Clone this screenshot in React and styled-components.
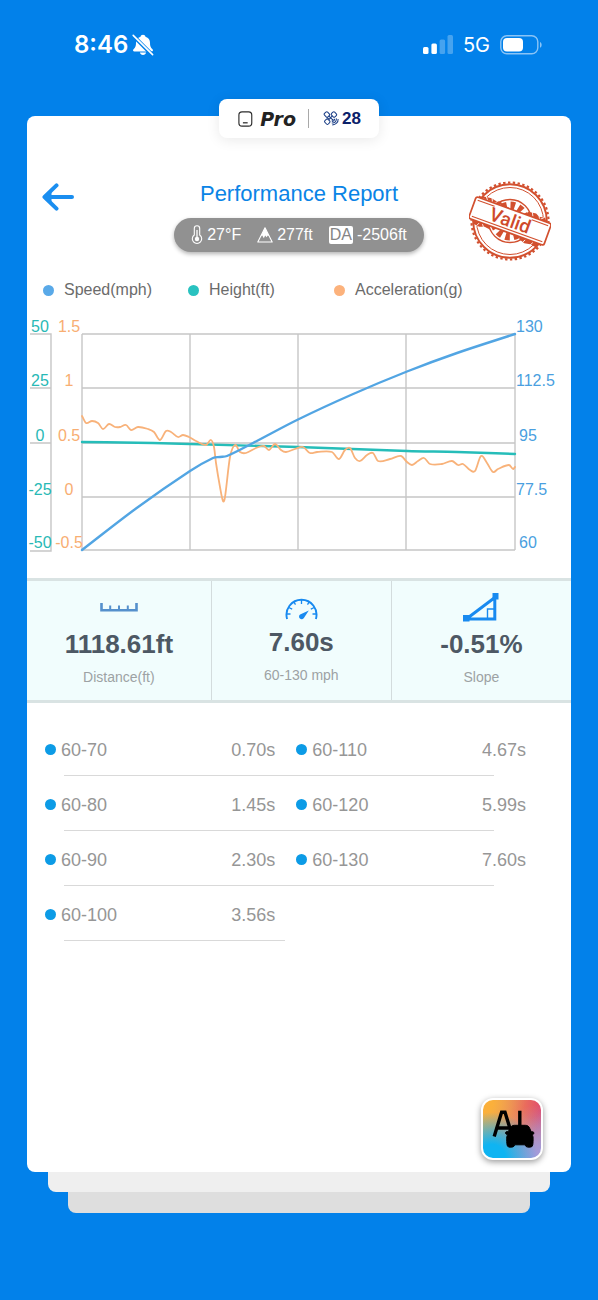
import React from "react";
import styled, { createGlobalStyle } from "styled-components";

const GlobalStyle = createGlobalStyle`
  *, *::before, *::after { box-sizing: border-box; }
  body {
    margin: 0;
    background: #0281ea;
    font-family: "Liberation Sans", Arial, sans-serif;
  }
  button { font: inherit; border: 0; padding: 0; background: none; cursor: pointer; }
`;

const Page = styled.div`
  min-height: 100vh;
  display: flex;
  flex-direction: column;
  padding: 0 27px 87px;
`;

const StatusBar = styled.header`
  display: flex;
  align-items: center;
  justify-content: space-between;
  height: 116px;
  padding: 0 28px 27px 47px;
  color: #fff;
`;

const StatusGroup = styled.div`
  display: flex;
  align-items: center;
  gap: ${(p) => p.$gap}px;
`;

const Clock = styled.span`
  font: 600 24px/32px Inter, sans-serif;
`;

const Network = styled.span`
  font: 400 20px/32px Inter, sans-serif;
`;

const Card = styled.main`
  position: relative;
  flex: 1;
  display: flex;
  flex-direction: column;
  background: #fff;
  border-radius: 8px;
`;

const StackedSheet = styled.div`
  height: ${(p) => p.$height}px;
  margin: 0 ${(p) => p.$inset}px;
  background: ${(p) => p.$color};
  border-radius: 0 0 8px 8px;
`;

const DeviceBadge = styled.div`
  position: absolute;
  top: -17px;
  left: 50%;
  transform: translateX(-50%);
  display: flex;
  align-items: center;
  width: 160px;
  height: 39px;
  padding: 0 18px;
  background: #fff;
  border-radius: 8px;
  box-shadow: 0 2px 14px rgba(0, 0, 0, 0.09);
`;

const ProLabel = styled.span`
  margin-left: 7px;
  color: #222;
  font: italic 700 19px/20px "DejaVu Sans", sans-serif;
`;

const BadgeDivider = styled.span`
  width: 1px;
  height: 19px;
  margin: 0 14px 0 12px;
  background: #a9a9a9;
`;

const SatelliteCount = styled.span`
  margin-left: 3px;
  color: #0b2069;
  font: 700 17px/20px "Liberation Sans", sans-serif;
`;

const ReportHeader = styled.section`
  display: grid;
  grid-template-columns: 1fr auto 1fr;
  align-items: start;
  padding: 64px 15px 0;
`;

const BackButton = styled.button`
  justify-self: start;
  display: flex;
  margin-top: 2px;
`;

const TitleBlock = styled.div`
  display: flex;
  flex-direction: column;
  align-items: center;
  gap: 10px;
`;

const Title = styled.h1`
  margin: 0;
  color: #0a84e6;
  font-size: 22px;
  font-weight: 400;
  line-height: 28px;
`;

const Conditions = styled.div`
  display: flex;
  align-items: center;
  justify-content: center;
  gap: 16px;
  width: 250px;
  height: 34px;
  border-radius: 17px;
  background: #919191;
  box-shadow: 0 2px 4px rgba(0, 0, 0, 0.3);
  color: #fff;
`;

const Condition = styled.span`
  display: flex;
  align-items: center;
  gap: 4px;
  font-size: 16px;
  line-height: 20px;
  white-space: nowrap;
`;

const DensityTag = styled.span`
  padding: 0 1px;
  border-radius: 2px;
  background: #fff;
  color: #858585;
  line-height: 18px;
`;

const StampHolder = styled.div`
  justify-self: end;
  display: flex;
  margin-right: 5px;
`;

const Legend = styled.ul`
  display: grid;
  grid-template-columns: 145px 146px auto;
  justify-content: start;
  margin: 0;
  padding: 18px 16px 0;
  list-style: none;
`;

const LegendItem = styled.li`
  display: flex;
  align-items: center;
  gap: 10px;
  color: #6b6b6b;
  font-size: 16px;
  line-height: 20px;
`;

const Dot = styled.span`
  flex: none;
  display: inline-block;
  width: 11px;
  height: 11px;
  border-radius: 50%;
  background: ${(p) => p.$color};
`;

const Chart = styled.svg`
  display: block;
  width: 100%;
  margin: 14px 0 18px;
  font-family: "Liberation Sans", Arial, sans-serif;
  font-size: 16px;
`;

const Stats = styled.section`
  display: grid;
  grid-template-columns: 51fr 50fr 50fr;
  border: solid #d9e3e3;
  border-width: 3px 0;
  background: #f1fdfd;
`;

const Stat = styled.div`
  display: flex;
  flex-direction: column;
  align-items: center;
  height: 119px;
  padding-top: ${(p) => (p.$raised ? 9 : 11)}px;
  border-left: ${(p) => (p.$first ? "0" : "1px solid #d3dcdd")};
`;

const StatIcon = styled.div`
  display: flex;
  align-items: ${(p) => p.$align || "center"};
  height: 30px;
`;

const StatValue = styled.strong`
  margin-top: 6px;
  color: #4d5864;
  font-size: 26px;
  line-height: 32px;
`;

const StatLabel = styled.span`
  margin-top: 7px;
  color: #9da2a4;
  font-size: 14px;
  line-height: 20px;
`;

const Splits = styled.table`
  width: calc(100% - 62px);
  margin: 18px 45px 0 17px;
  border-collapse: collapse;
  table-layout: fixed;
  color: #969696;
  font-size: 18px;
  line-height: 20px;
`;

const SplitRow = styled.tr`
  height: 55px;
  background: linear-gradient(#d9d9d9, #d9d9d9) 20px 100% no-repeat;
  background-size: ${(p) => (p.$half ? "46%" : "calc(100% - 52px)")} 1px;
`;

const SplitRange = styled.th`
  width: ${(p) => (p.$second ? 31 : 29)}%;
  padding: 2px 0 0 ${(p) => (p.$second ? 21 : 1)}px;
  font-weight: 400;
  text-align: left;
`;

const RangeLabel = styled.span`
  display: flex;
  align-items: center;
  gap: 5px;
`;

const SplitTime = styled.td`
  width: ${(p) => (p.$second ? 21 : 19)}%;
  padding: 2px 0 0;
  text-align: right;
`;

const AiButton = styled.button`
  display: flex;
  align-self: flex-end;
  width: 62px;
  height: 62px;
  margin: auto 28px 12px 0;
  overflow: hidden;
  border: 2px solid #fff;
  border-radius: 12px;
  background:
    radial-gradient(circle at 15% 100%, #0fb4f2 0 18%, rgba(15, 180, 242, 0) 60%),
    radial-gradient(circle at 0% 5%, #fbb03b 0 12%, rgba(251, 176, 59, 0) 75%),
    radial-gradient(circle at 100% 100%, #a59ad8 0 10%, rgba(165, 154, 216, 0) 65%),
    radial-gradient(circle at 85% 15%, #e0486f 0 12%, rgba(224, 72, 111, 0) 75%),
    #c3a39c;
  box-shadow: 0 2px 6px rgba(0, 0, 0, 0.4);
`;

const accelPoints = [
  [0, 82], [4, 89], [10, 87], [16, 89], [21, 95], [27, 90], [33, 93], [38, 93],
  [44, 91], [49, 96], [56, 93], [66, 95], [72, 98], [78, 106], [84, 97],
  [89, 98], [96, 103], [101, 101], [107, 103], [114, 107], [124, 111],
  [129, 106], [132, 113], [134, 129], [138, 153], [141, 167], [143, 163],
  [148, 123], [153, 111], [158, 118], [164, 119], [174, 114], [182, 112],
  [187, 116], [193, 110], [199, 116], [204, 118], [213, 115], [221, 113],
  [228, 119], [235, 118], [250, 118], [257, 125], [263, 116], [268, 114],
  [273, 124], [278, 127], [285, 121], [291, 119], [296, 127], [308, 125],
  [319, 122], [325, 128], [330, 131], [336, 127], [342, 124], [348, 130],
  [360, 130], [370, 127], [376, 131], [381, 130], [388, 136], [393, 137],
  [399, 122], [405, 129], [411, 138], [416, 135], [427, 131], [431, 135],
  [433, 133],
];

const speedPoints = [
  [0, 216], [54, 174.500], [108, 137], [131, 124], [138, 123], [145, 122],
  [171, 109], [216, 85.500], [270, 60.500], [325, 37.500], [375, 19], [433, 0],
];

const heightPoints = [[0, 108], [71, 109], [216, 113], [325, 117], [375, 118], [433, 120]];

/* Catmull-Rom spline through the samples, as cubic segments. */
function smoothPath(points) {
  let d = `M${points[0][0]} ${points[0][1]}`;
  for (let i = 0; i < points.length - 1; i += 1) {
    const a = points[Math.max(i - 1, 0)];
    const b = points[i];
    const c = points[i + 1];
    const e = points[Math.min(i + 2, points.length - 1)];
    const step = (c[0] - b[0]) / 3;
    const slopeB = (c[1] - a[1]) / (c[0] - a[0]);
    const slopeC = (e[1] - b[1]) / (e[0] - b[0]);
    d += ` C${b[0] + step} ${b[1] + slopeB * step} ${c[0] - step} ${c[1] - slopeC * step} ${c[0]} ${c[1]}`;
  }
  return d;
}

const rowsY = [0, 54, 109, 163, 216];
const columnsX = [0, 108, 216, 324, 433];
const labelsY = [-2, 52, 107, 161, 214];
const heightLabels = ["50", "25", "0", "-25", "-50"];
const accelLabels = ["1.5", "1", "0.5", "0", "-0.5"];
const speedLabels = ["130", "112.5", "95", "77.5", "60"];

function ReportChart() {
  return (
    <Chart viewBox="-55 -20 544 246" role="img" aria-label="Speed, height and acceleration">
      <g stroke="#c6c6c6" strokeWidth="1.4" fill="none">
        {rowsY.map((y) => <path key={y} d={`M0 ${y}H433`} />)}
        {columnsX.map((x) => <path key={x} d={`M${x} 0V216`} />)}
        <path d="M-52 0H-31V217H-52M-52 54H-31M-52 109H-31" />
      </g>
      <g fill="#28b9b6" textAnchor="middle">
        {heightLabels.map((t, i) => <text key={t} x={-42} y={labelsY[i]}>{t}</text>)}
      </g>
      <g fill="#f8ae72" textAnchor="middle">
        {accelLabels.map((t, i) => <text key={t} x={-13} y={labelsY[i]}>{t}</text>)}
      </g>
      <g fill="#4a9fe0">
        {speedLabels.map((t, i) => (
          <text key={t} x={t.length < 3 ? 437 : 434} y={labelsY[i]}>{t}</text>
        ))}
      </g>
      <g fill="none" strokeLinecap="round" strokeLinejoin="round">
        <path d={smoothPath(heightPoints)} stroke="#26bdb9" strokeWidth="2.4" />
        <path d={smoothPath(accelPoints)} stroke="#f8b27a" strokeWidth="1.8" />
        <path d={smoothPath(speedPoints)} stroke="#52a5e3" strokeWidth="2.4" />
      </g>
    </Chart>
  );
}

const MutedBell = () => (
  <svg width="22" height="22" viewBox="0 0 22 22" aria-label="Silent mode">
    <path d="M11 .8c-1.400 0-2.300.9-2.500 2C5.500 3.700 4 6 4 8.800c0 3.400-.6 4.700-2.500 6.400-.9.900-.4 2.200.8 2.200h17.400c1.200 0 1.700-1.300.8-2.200C18.600 13.500 18 12.200 18 8.800c0-2.800-1.500-5.100-4.500-6C13.300 1.700 12.400.8 11 .8zM7.900 18.600h6.200c-.3 1.600-1.500 2.500-3.100 2.500s-2.800-.9-3.100-2.500z" fill="#fff" />
    <path d="M.6 2.500 18.800 20.700" stroke="#0281ea" strokeWidth="2" />
    <path d="M2 .6 21.200 19.800" stroke="#0281ea" strokeWidth="1.200" />
    <path d="M1.200 1.400 20.600 20.600" stroke="#fff" strokeWidth="1.600" strokeLinecap="round" />
  </svg>
);

const SignalBars = () => (
  <svg width="30" height="20" viewBox="0 0 30 20" aria-label="Signal, two of four bars">
    <g fill="#fff">
      <rect x="0" y="12" width="5.500" height="7" rx="1.500" />
      <rect x="8.400" y="8.500" width="5.500" height="10.500" rx="1.500" />
      <rect x="16.600" y="4.500" width="5.500" height="14.500" rx="1.500" opacity=".27" />
      <rect x="24.500" y="0" width="5.500" height="19" rx="1.500" opacity=".27" />
    </g>
  </svg>
);

const Battery = () => (
  <svg width="43" height="20" viewBox="0 0 43 20" aria-label="Battery, half full">
    <rect x=".8" y=".8" width="37" height="18" rx="6" fill="none" stroke="#8ac4f6" strokeWidth="1.400" />
    <rect x="3" y="3" width="20" height="13.600" rx="4" fill="#fff" />
    <path d="M40 7c2.200.8 2.200 5 0 5.800z" fill="#8ac4f6" />
  </svg>
);

const DeviceIcon = () => (
  <svg width="17" height="18" viewBox="0 0 17 18" aria-hidden="true">
    <rect x="2" y="1.500" width="13.500" height="15" rx="3.300" fill="none" stroke="#2b2b2b" strokeWidth="1.200" />
    <path d="M6.200 13h5" stroke="#2b2b2b" strokeWidth="1.300" />
  </svg>
);

const SatelliteIcon = () => (
  <svg width="17" height="17" viewBox="0 0 17 17" fill="none" stroke="#1c3f86" strokeWidth="1.100" aria-hidden="true">
    <rect x="1.600" y="2" width="5" height="4.600" rx="1.300" transform="rotate(45 4.100 4.300)" />
    <rect x="9" y="2" width="5" height="4.600" rx="1.300" transform="rotate(45 11.500 4.300)" />
    <rect x="2" y="9.500" width="5" height="4.600" rx="1.300" transform="rotate(45 4.500 11.800)" />
    <path d="M6 5.800 10.200 10M9.800 5.800 6.200 9.700M4.200 7.200l2 2M9.300 10.800l1.600-1.600" />
    <path d="M14 8.300c.6 2.800-1.800 5.300-4.800 5M12.200 8.700c.1 1.600-1.200 3-2.900 3M15.900 9c.2 3.500-2.600 6.300-6.100 6.200" />
  </svg>
);

const BackArrow = () => (
  <svg width="33" height="30" viewBox="0 0 33 30" fill="none" stroke="#1a8ef0" strokeWidth="4" strokeLinecap="round" strokeLinejoin="round" aria-hidden="true">
    <path d="M2.500 15H30M14.500 3.400 2.500 15l12 11.600" />
    <path d="M3 15 9.500 8.800v12.400z" fill="#1a8ef0" strokeWidth="0" />
  </svg>
);

const Thermometer = () => (
  <svg width="12" height="20" viewBox="0 0 12 20" aria-hidden="true">
    <path d="M3.300 10V3.500a2.700 2.700 0 0 1 5.400 0V10a4.700 4.700 0 1 1-5.400 0z" fill="none" stroke="#fff" strokeWidth="1.100" />
    <path d="M6 5v8" stroke="#fff" strokeWidth="1.300" />
    <circle cx="6" cy="14" r="2.200" fill="#fff" />
  </svg>
);

const Mountain = () => (
  <svg width="16" height="16" viewBox="0 0 16 16" aria-hidden="true">
    <path d="M8 .8.800 15h14.400z" fill="none" stroke="#fff" strokeWidth="1.100" strokeLinejoin="round" />
    <path d="M8 .8 3.700 9.400l1.600-1 1.500 2.800 1.400-2.600 1.300 1.600 1.300-1.700 1.500.8z" fill="#fff" />
  </svg>
);

const Stamp = () => (
  <svg width="82" height="82" viewBox="-41 -41 82 82" role="img" aria-label="Valid">
    <g fill="none" stroke="#d2502f">
      <circle r="38.500" strokeWidth="2.200" strokeDasharray="2.400 2.440" />
      <circle r="36.800" strokeWidth="1.900" />
      <circle r="33.500" strokeWidth="1" />
      <circle r="21.500" strokeWidth="1.300" />
      <circle r="15.500" strokeWidth="8" strokeDasharray="4.400 3.720" />
    </g>
    <g transform="rotate(20)">
      <path d="M-33-14l8-1 5 1 5-1 3 3h-25zM14-15l8-1 4 2 6-1 3 4H14zM-34 15l7 1 5-2 7 1-4-4h-17zM15 14l6 2 6-1 6 1 3-5H14z" fill="#d2502f" />
      <g stroke="#fff" strokeWidth=".8">
        <path d="M-31-15l3 3M-25-16l2 4M-18-15l-2 3M18-16l2 4M25-16l2 4M31-15l-3 3M-30 16l2-4M-22 16l-3-4M19 16l2-4M27 16l2-4" />
      </g>
      <rect x="-40" y="-11.500" width="80" height="23" rx="2" fill="#fff" stroke="#d2502f" strokeWidth="1.700" />
      <path d="M-37.500-8.500h18M20-8.500h17.500M-37.500 8.500h75" stroke="#d2502f" strokeWidth="1.100" />
      <text y="6" textAnchor="middle" fill="#cf4a2b" fontFamily="Roboto, sans-serif" fontWeight="500" fontSize="19">Valid</text>
    </g>
  </svg>
);

const Ruler = () => (
  <svg width="38" height="9" viewBox="0 0 38 9" fill="none" stroke="#5590cc" aria-hidden="true">
    <path d="M1.500 0v7.200h35V0" strokeWidth="2.600" />
    <path d="M10.200 2.500V7M19 2.500V7M27.800 2.500V7" strokeWidth="2" />
  </svg>
);

const Gauge = () => (
  <svg width="33" height="22" viewBox="0 0 33 22" fill="none" stroke="#188af0" aria-hidden="true">
    <path d="M2.100 21A15 15 0 1 1 30.900 21" strokeWidth="1.900" />
    <path d="M16.500 2v4M9 4.200l1.500 2.500M24 4.200l-1.500 2.500M3.700 9.500l3.500 1.600M29.300 9.500l-3.500 1.600M2 16h3.500M31 16h-3.500" strokeWidth="1.300" />
    <path d="M23.800 12.500 18.900 20a2.600 2.600 0 1 1-3.800-3.400z" fill="#188af0" stroke="none" />
  </svg>
);

const SlopeIcon = () => (
  <svg width="36" height="29" viewBox="0 0 36 29" fill="none" stroke="#188af0" aria-hidden="true">
    <path d="M4 25.500 31.800 4.500V26H3z" strokeWidth="3" />
    <path d="M24.500 25v-9H31" strokeWidth="1.400" />
    <path d="M0 22h6.500v6.500H0zM29.500 0h6v6.500h-6z" fill="#188af0" stroke="none" />
  </svg>
);

const AiCar = () => (
  <svg width="58" height="58" viewBox="0 0 58 58" aria-hidden="true">
    <path d="M11.200 36.500 18.600 12.200h3.400L29.500 36.500M14 28h14M36.800 10.800V32" fill="none" stroke="#000" strokeWidth="3.400" />
    <g transform="translate(-1.600 -1)">
      <path d="M33 26.300h11c2 0 3.500 1 4.300 3l1.500 3.500c1.500-.4 2.900.3 2.700 1.400-.1.900-.8 1.300-1.700 1.500.9 1.500 1 2.700.9 5.200-.1 2.500 0 4.800-.9 6.400-.8 1.200-5.600 1.200-6.300 0l-.9-1.500H33.400l-.9 1.500c-.7 1.200-5.500 1.200-6.300 0-.9-1.600-.8-3.900-.9-6.400-.1-2.500.1-3.900 1-5.200-1-.1-2-.5-2.200-1.600-.2-1.200 1.300-1.800 2.700-1.300l1.900-3.500c1-2 2.300-3 4.300-3z" fill="#000" stroke="#000" strokeWidth="1" strokeLinejoin="round" />
    </g>
  </svg>
);

const legend = [
  ["Speed(mph)", "#59a9e8"],
  ["Height(ft)", "#29c2c0"],
  ["Acceleration(g)", "#fcb27c"],
];

const splits = [
  ["60-70", "0.70s", "60-110", "4.67s"],
  ["60-80", "1.45s", "60-120", "5.99s"],
  ["60-90", "2.30s", "60-130", "7.60s"],
  ["60-100", "3.56s"],
];

function SplitCells({ range, time, second }) {
  return (
    <>
      <SplitRange scope="row" $second={second}>
        <RangeLabel><Dot $color="#0c9be6" />{range}</RangeLabel>
      </SplitRange>
      <SplitTime $second={second}>{time}</SplitTime>
    </>
  );
}

export default function App() {
  return (
    <>
      <GlobalStyle />
      <Page>
        <StatusBar>
          <StatusGroup $gap={4}>
            <Clock>8:46</Clock>
            <MutedBell />
          </StatusGroup>
          <StatusGroup $gap={10}>
            <SignalBars />
            <Network>5G</Network>
            <Battery />
          </StatusGroup>
        </StatusBar>

        <Card>
          <DeviceBadge>
            <DeviceIcon />
            <ProLabel>Pro</ProLabel>
            <BadgeDivider />
            <SatelliteIcon />
            <SatelliteCount>28</SatelliteCount>
          </DeviceBadge>

          <ReportHeader>
            <BackButton type="button" aria-label="Back"><BackArrow /></BackButton>
            <TitleBlock>
              <Title>Performance Report</Title>
              <Conditions>
                <Condition><Thermometer />27°F</Condition>
                <Condition><Mountain />277ft</Condition>
                <Condition><DensityTag>DA</DensityTag>-2506ft</Condition>
              </Conditions>
            </TitleBlock>
            <StampHolder><Stamp /></StampHolder>
          </ReportHeader>

          <Legend>
            {legend.map(([name, color]) => (
              <LegendItem key={name}><Dot $color={color} />{name}</LegendItem>
            ))}
          </Legend>

          <ReportChart />

          <Stats>
            <Stat $first>
              <StatIcon><Ruler /></StatIcon>
              <StatValue>1118.61ft</StatValue>
              <StatLabel>Distance(ft)</StatLabel>
            </Stat>
            <Stat $raised>
              <StatIcon $align="flex-end"><Gauge /></StatIcon>
              <StatValue>7.60s</StatValue>
              <StatLabel>60-130 mph</StatLabel>
            </Stat>
            <Stat>
              <StatIcon><SlopeIcon /></StatIcon>
              <StatValue>-0.51%</StatValue>
              <StatLabel>Slope</StatLabel>
            </Stat>
          </Stats>

          <Splits>
            <tbody>
              {splits.map(([range, time, range2, time2]) => (
                <SplitRow key={range} $half={!range2}>
                  <SplitCells range={range} time={time} />
                  {range2 ? <SplitCells range={range2} time={time2} second /> : <td colSpan={2} />}
                </SplitRow>
              ))}
            </tbody>
          </Splits>

          <AiButton type="button" aria-label="AI car assistant"><AiCar /></AiButton>
        </Card>
        <StackedSheet $height={20} $inset={21} $color="#efefef" />
        <StackedSheet $height={21} $inset={41} $color="#dedede" />
      </Page>
    </>
  );
}
